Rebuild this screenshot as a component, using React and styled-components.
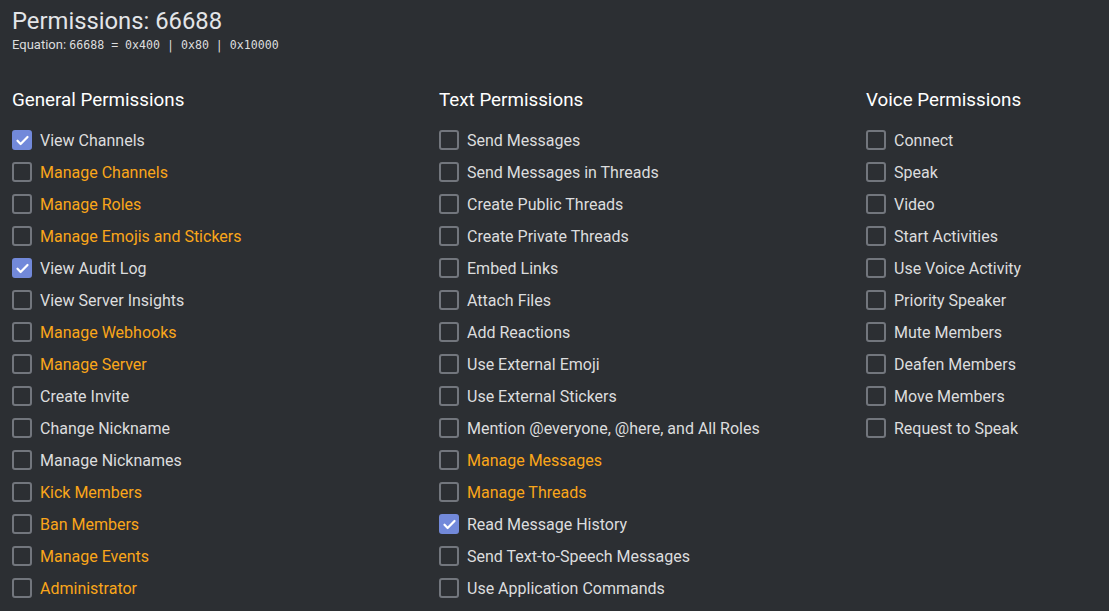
import React from "react";
import styled, { createGlobalStyle } from "styled-components";

const GlobalStyle = createGlobalStyle`
    html, body {
        margin: 0;
        background: #2c2f33;
        overflow: hidden;
    }
    body {
        font-family: Roboto, "Liberation Sans", sans-serif;
        color: #dcddde;
    }
`;

const Page = styled.div`
    box-sizing: border-box;
    width: 1109px;
    height: 611px;
    padding: 7px 12px 0;
    background: #2c2f33;
    overflow: hidden;
`;

const Title = styled.h1`
    margin: 0;
    font-size: 23.8px;
    line-height: 28px;
    font-weight: 400;
    color: #e3e5e8;
`;

const Equation = styled.div`
    margin-top: 2px;
    font-size: 13px;
    line-height: 16px;
    color: #dcddde;
`;

const Mono = styled.span`
    font-family: "DejaVu Sans Mono", "Liberation Mono", monospace;
    font-size: 11.6px;
`;

const Columns = styled.div`
    display: grid;
    grid-template-columns: 427px 427px 219px;
    margin-top: 35px;
`;

const Column = styled.section`
    display: flex;
    flex-direction: column;
`;

const Heading = styled.h2`
    margin: 0 0 12px;
    font-size: 18.8px;
    line-height: 24px;
    font-weight: 400;
    color: #ffffff;
`;

const Row = styled.label`
    display: flex;
    align-items: center;
    gap: 8px;
    height: 32px;
    font-size: 16px;
    white-space: nowrap;
    color: ${p => (p.danger ? "#faa61a" : "#dcddde")};
`;

const Box = styled.span`
    box-sizing: border-box;
    width: 20px;
    height: 20px;
    border-radius: 3px;
    border: 2px solid ${p => (p.checked ? "#7289da" : "#72767d")};
    background: ${p => (p.checked ? "#7289da" : "transparent")};
    display: flex;
    align-items: center;
    justify-content: center;
    flex-shrink: 0;
`;

const groups = [
    {
        title: "General Permissions",
        items: [
            ["View Channels", 0, 1],
            ["Manage Channels", 1, 0],
            ["Manage Roles", 1, 0],
            ["Manage Emojis and Stickers", 1, 0],
            ["View Audit Log", 0, 1],
            ["View Server Insights", 0, 0],
            ["Manage Webhooks", 1, 0],
            ["Manage Server", 1, 0],
            ["Create Invite", 0, 0],
            ["Change Nickname", 0, 0],
            ["Manage Nicknames", 0, 0],
            ["Kick Members", 1, 0],
            ["Ban Members", 1, 0],
            ["Manage Events", 1, 0],
            ["Administrator", 1, 0],
        ],
    },
    {
        title: "Text Permissions",
        items: [
            ["Send Messages", 0, 0],
            ["Send Messages in Threads", 0, 0],
            ["Create Public Threads", 0, 0],
            ["Create Private Threads", 0, 0],
            ["Embed Links", 0, 0],
            ["Attach Files", 0, 0],
            ["Add Reactions", 0, 0],
            ["Use External Emoji", 0, 0],
            ["Use External Stickers", 0, 0],
            ["Mention @everyone, @here, and All Roles", 0, 0],
            ["Manage Messages", 1, 0],
            ["Manage Threads", 1, 0],
            ["Read Message History", 0, 1],
            ["Send Text-to-Speech Messages", 0, 0],
            ["Use Application Commands", 0, 0],
        ],
    },
    {
        title: "Voice Permissions",
        items: [
            ["Connect", 0, 0],
            ["Speak", 0, 0],
            ["Video", 0, 0],
            ["Start Activities", 0, 0],
            ["Use Voice Activity", 0, 0],
            ["Priority Speaker", 0, 0],
            ["Mute Members", 0, 0],
            ["Deafen Members", 0, 0],
            ["Move Members", 0, 0],
            ["Request to Speak", 0, 0],
        ],
    },
];

function Check({ checked }) {
    return (
        <Box checked={checked}>
            {checked && (
                <svg width="15" height="15" viewBox="0 0 24 24">
                    <path d="M4 12.5l5 5L20 6.5" fill="none" stroke="#fff" strokeWidth="3.6" strokeLinecap="round" strokeLinejoin="round" />
                </svg>
            )}
        </Box>
    );
}

export default function App() {
    return (
        <Page>
            <GlobalStyle />
            <Title>Permissions: 66688</Title>
            <Equation>
                Equation: <Mono>66688 = 0x400 | 0x80 | 0x10000</Mono>
            </Equation>
            <Columns>
                {groups.map(g => (
                    <Column key={g.title}>
                        <Heading>{g.title}</Heading>
                        {g.items.map(([name, danger, checked]) => (
                            <Row key={name} danger={!!danger}>
                                <Check checked={!!checked} />
                                {name}
                            </Row>
                        ))}
                    </Column>
                ))}
            </Columns>
        </Page>
    );
}
